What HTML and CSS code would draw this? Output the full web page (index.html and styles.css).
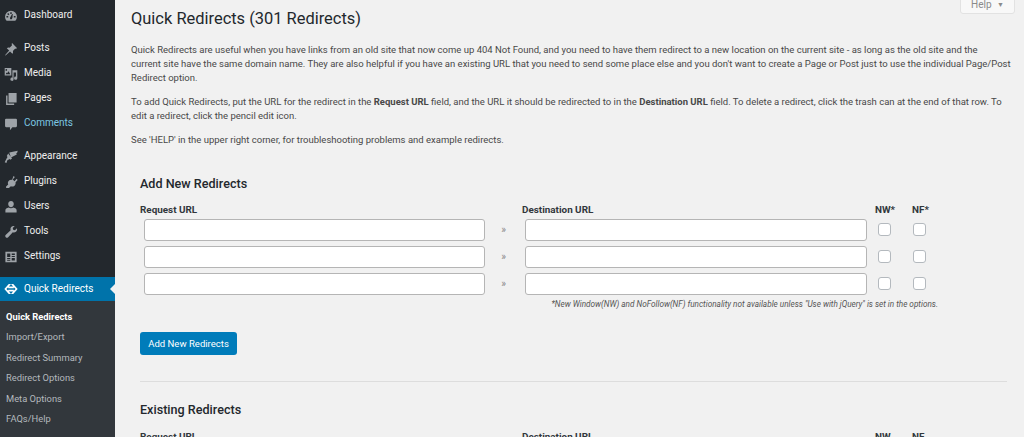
FILE: index.html
```html
<!DOCTYPE html>
<html lang="en">
  <head>
    <meta charset="UTF-8" />
    <title>Quick Redirects</title>
    <link rel="stylesheet" href="styles.css">
  </head>
  <body>
    <div class="wrap">
      <nav class="sidebar">
        <ul class="menu">
          <li><svg class="icon" viewBox="0 0 20 20"><path fill-rule="evenodd" d="M10 2.500a8.500 8.500 0 0 0-8.500 8.500c0 2.300.9 4.300 2.300 5.800h12.400a8.500 8.500 0 0 0 2.300-5.800A8.500 8.500 0 0 0 10 2.500zM9 4.500h2v2.500H9zM4.500 7l1.500-1.300 1.700 1.800-1.500 1.400zM3.500 10h2.500v2H3.500zm7.500 4.500H9L8.500 13l3-6h1l-.5 6zM14 10h2.500v2H14z"/></svg>Dashboard</li>
          <li class="sep"><svg class="icon" viewBox="0 0 20 20"><path d="M11.500 1.500l7 7-1.400 1.400-1-.6-3.400 3.400c.5 1.500.3 3-.7 4.100l-3.400-3.400L3 18.500l-1.700 1 1-1.700 5.100-5.600L4 8.800c1.100-1 2.600-1.200 4.100-.7l3.400-3.400-.6-1.800z"/></svg>Posts</li>
          <li><svg class="icon" viewBox="0 0 20 20"><path fill-rule="evenodd" d="M1 1.500h9.500v10.500H1zM3.300 3a1.200 1.200 0 1 0 0 2.400 1.200 1.200 0 0 0 0-2.400zM6.500 6L4.500 9 3.500 8 2.500 10.500H9z"/><path d="M12 4.500h7V16a2.300 2.300 0 1 1-1.800-2.200V8h-3.500v9.500a2.300 2.300 0 1 1-1.700-2.200z"/></svg>Media</li>
          <li><svg class="icon" viewBox="0 0 20 20"><path d="M6.500 1.500h11.500v13.500H6.500zM3 5h2v11.500h9.500v2H3z"/></svg>Pages</li>
          <li class="current"><svg class="icon" viewBox="0 0 20 20"><path d="M3 2.500h14a1.500 1.500 0 0 1 1.500 1.500v9a1.500 1.500 0 0 1-1.500 1.500h-5L8.500 19v-4.500H3A1.500 1.500 0 0 1 1.500 13V4A1.500 1.500 0 0 1 3 2.500z"/></svg>Comments</li>
          <li class="sep"><svg class="icon" viewBox="0 0 20 20"><path d="M7.500 3.500L19.500 1l-.5 2.500-1.500 1.300.8 1.500-8.300 4.500zM6 5l5.500 7-2.500 2-1-1-3.500 2-1 3.500L1 17.500l2.500-5 1.500-2.500-1-1.500z"/></svg>Appearance</li>
          <li><svg class="icon" viewBox="0 0 20 20"><path d="M13.500 1.500l2 1.500-3 3.500 2.500 2.300 3-3.300 1.500 1.700-3 3.300c.5 2-.2 4-1.900 5.200-1.500 1-3.300 1.100-4.800.3L7 18.500H3v-2l3-3c-.8-1.600-.6-3.500.6-4.900 1.300-1.500 3.100-2.100 4.900-1.600z"/></svg>Plugins</li>
          <li><svg class="icon" viewBox="0 0 20 20"><path d="M10 1.500c2.200 0 4 1.700 4 4.200s-1.800 4.800-4 4.800-4-2.300-4-4.800 1.800-4.200 4-4.200zM2 18v-3.500c0-1.700 1.800-3 4.800-3.700 1.800 1.300 4.600 1.300 6.400 0 3 .7 4.800 2 4.800 3.700V18z"/></svg>Users</li>
          <li><svg class="icon" viewBox="0 0 20 20"><path d="M18.500 4.700c.6 1.800.1 3.800-1.400 5-1.300 1.100-3 1.300-4.500.8l-7 7.200a2 2 0 0 1-2.800 0l-.5-.5a2 2 0 0 1 0-2.800L9.500 7.400c-.5-1.500-.3-3.200.8-4.500 1.200-1.500 3.200-2 5-1.400L12.500 4.400l.6 2.500 2.500.6z"/></svg>Tools</li>
          <li><svg class="icon" viewBox="0 0 20 20"><path fill-rule="evenodd" d="M2 2.500h16v15H2zM4.500 5v5h4.500V5zm6.500 0v2h4.500V5zm0 3.500v1.500h4.500V8.500zM4.500 11.500V13h4.500v-1.500zm6.500 0V15h4.500v-3.500zM4.500 14v1.500h4.500V14z"/></svg>Settings</li>
          <li class="sep active"><svg class="icon" viewBox="0 0 20 20"><path fill-rule="evenodd" d="M10 3L6.800 3 .5 10l6.300 7H10l-3-3.500h6l-3 3.500h3.200l6.300-7-6.300-7H10l3 3.500H7zM6 8.800h8V7.500l2.500 2.500-2.500 2.500v-1.300H6v1.300L3.500 10 6 7.500z"/></svg>Quick Redirects</li>
        </ul>
        <ul class="submenu">
          <li class="sub-current">Quick Redirects</li>
          <li>Import/Export</li>
          <li>Redirect Summary</li>
          <li>Redirect Options</li>
          <li>Meta Options</li>
          <li>FAQs/Help</li>
        </ul>
      </nav>

      <main class="content">
        <div class="help-tab">Help <span class="caret">▼</span></div>
        <h1>Quick Redirects (301 Redirects)</h1>
        <p>Quick Redirects are useful when you have links from an old site that now come up 404 Not Found, and you need to have them redirect to a new location on the current site - as long as the old site and the<br>current site have the same domain name. They are also helpful if you have an existing URL that you need to send some place else and you don't want to create a Page or Post just to use the individual Page/Post<br>Redirect option.</p>
        <p>To add Quick Redirects, put the URL for the redirect in the <b>Request URL</b> field, and the URL it should be redirected to in the <b>Destination URL</b> field. To delete a redirect, click the trash can at the end of that row. To<br>edit a redirect, click the pencil edit icon.</p>
        <p>See 'HELP' in the upper right corner, for troubleshooting problems and example redirects.</p>

        <section class="panel">
          <h2 class="add-title">Add New Redirects</h2>
          <div class="redirect-grid">
            <span class="col-label">Request URL</span>
            <span></span>
            <span class="col-label">Destination URL</span>
            <span class="col-label">NW*</span>
            <span class="col-label">NF*</span>

            <input class="url-input" type="text">
            <span class="arrow">»</span>
            <input class="url-input dest" type="text">
            <span class="check"></span>
            <span class="check nf"></span>

            <input class="url-input" type="text">
            <span class="arrow">»</span>
            <input class="url-input dest" type="text">
            <span class="check"></span>
            <span class="check nf"></span>

            <input class="url-input" type="text">
            <span class="arrow">»</span>
            <input class="url-input dest" type="text">
            <span class="check"></span>
            <span class="check nf"></span>
          </div>
          <div class="note">*New Window(NW) and NoFollow(NF) functionality not available unless "Use with jQuery" is set in the options.</div>
          <button class="primary-btn">Add New Redirects</button>
          <hr>
          <h2 class="existing-title">Existing Redirects</h2>
          <div class="redirect-grid">
            <span class="col-label">Request URL</span>
            <span></span>
            <span class="col-label">Destination URL</span>
            <span class="col-label">NW</span>
            <span class="col-label">NF</span>
          </div>
        </section>
      </main>
    </div>
  </body>
</html>
```

FILE: styles.css
```css
* {
  margin: 0;
  padding: 0;
  box-sizing: border-box;
}

html,
body {
  height: 437px;
  overflow: hidden;
}

body {
  font-family: Roboto, "Open Sans", sans-serif;
  font-size: 9.5px;
  line-height: 14.2px;
  background: #f1f1f1;
  color: #484848;
}

.wrap {
  display: flex;
  height: 437px;
}

.sidebar {
  width: 115px;
  flex: none;
  background: #23282d;
  color: #eee;
  padding-top: 3px;
}

.menu,
.submenu {
  list-style: none;
}

.menu li {
  position: relative;
  display: flex;
  align-items: center;
  height: 25px;
  font-size: 10px;
  padding-left: 4px;
}

.menu li.sep {
  margin-top: 8px;
}

.icon {
  width: 14px;
  height: 14px;
  margin-right: 6px;
  flex: none;
  fill: #9ea3a8;
}

.menu li.current {
  color: #7cc7e2;
}

.menu li.active {
  background: #0073aa;
  color: #fff;
  height: 24px;
}

.menu li.active .icon {
  fill: #fff;
}

/* little notch pointing at the content */
.menu li.active::after {
  content: "";
  position: absolute;
  right: 0;
  top: 7px;
  border: 5px solid transparent;
  border-right-color: #f1f1f1;
}

.submenu {
  background: #32373c;
  padding: 6px 0 0 6px;
  height: 136px;
  color: #b4b9be;
}

.submenu li {
  height: 20.4px;
  line-height: 20.4px;
  font-size: 9.35px;
}

.submenu .sub-current {
  color: #fff;
  font-weight: 700;
}

.content {
  position: relative;
  flex: 1;
  min-width: 0;
  padding: 8px 17px 0 16px;
}

.content h1 {
  font-size: 16.45px;
  font-weight: 400;
  line-height: 22px;
  color: #23282d;
  margin-bottom: 13px;
}

.content p {
  margin-bottom: 9.6px;
  white-space: nowrap;
}

.help-tab {
  position: absolute;
  top: -5px;
  right: 9px;
  width: 55px;
  height: 19px;
  padding-top: 2px;
  text-align: center;
  background: #f8f8f8;
  border: 1px solid #e2e2e2;
  border-radius: 0 0 3px 3px;
  color: #8a8a8a;
  font-size: 10px;
}

.caret {
  font-size: 7px;
  vertical-align: 1px;
  margin-left: 3px;
}

.panel {
  padding-left: 9px;
}

.panel h2 {
  font-size: 12.6px;
  font-weight: 500;
  line-height: 16px;
  color: #23282d;
}

.add-title {
  margin-top: 29px;
  margin-bottom: 11px;
}

.redirect-grid {
  display: grid;
  grid-template-columns: 345px 37px 353px 37px 37px;
  grid-auto-rows: 27px;
  grid-template-rows: 13px;
  align-items: center;
}

.redirect-grid > .col-label {
  font-weight: 700;
  font-size: 9.9px;
  color: #32373c;
  line-height: 13px;
}

.url-input {
  width: 341px;
  height: 22px;
  margin-left: 4px;
  background: #fff;
  border: 1px solid #b5b5b5;
  border-radius: 3px;
}

.url-input.dest {
  width: 342px;
  margin-left: 3px;
}

.arrow {
  text-align: center;
  color: #888;
  font-size: 10px;
}

.check {
  display: block;
  width: 13px;
  height: 13px;
  margin-left: 3px;
  background: #fff;
  border: 1px solid #b4b9be;
  border-radius: 3px;
}

.check.nf {
  margin-left: 1px;
}

.note {
  width: 798px;
  text-align: right;
  font-style: italic;
  font-size: 8.2px;
  line-height: 14px;
  color: #555;
}

.primary-btn {
  display: block;
  margin-top: 21px;
  width: 97px;
  height: 23px;
  background: #007cba;
  color: #fff;
  border: none;
  border-radius: 3px;
  font-family: inherit;
  font-size: 9.55px;
}

.panel hr {
  border: none;
  border-top: 1px solid #ddd;
  margin-top: 26px;
}

.existing-title {
  margin-top: 20px;
  margin-bottom: 12px;
}
```
